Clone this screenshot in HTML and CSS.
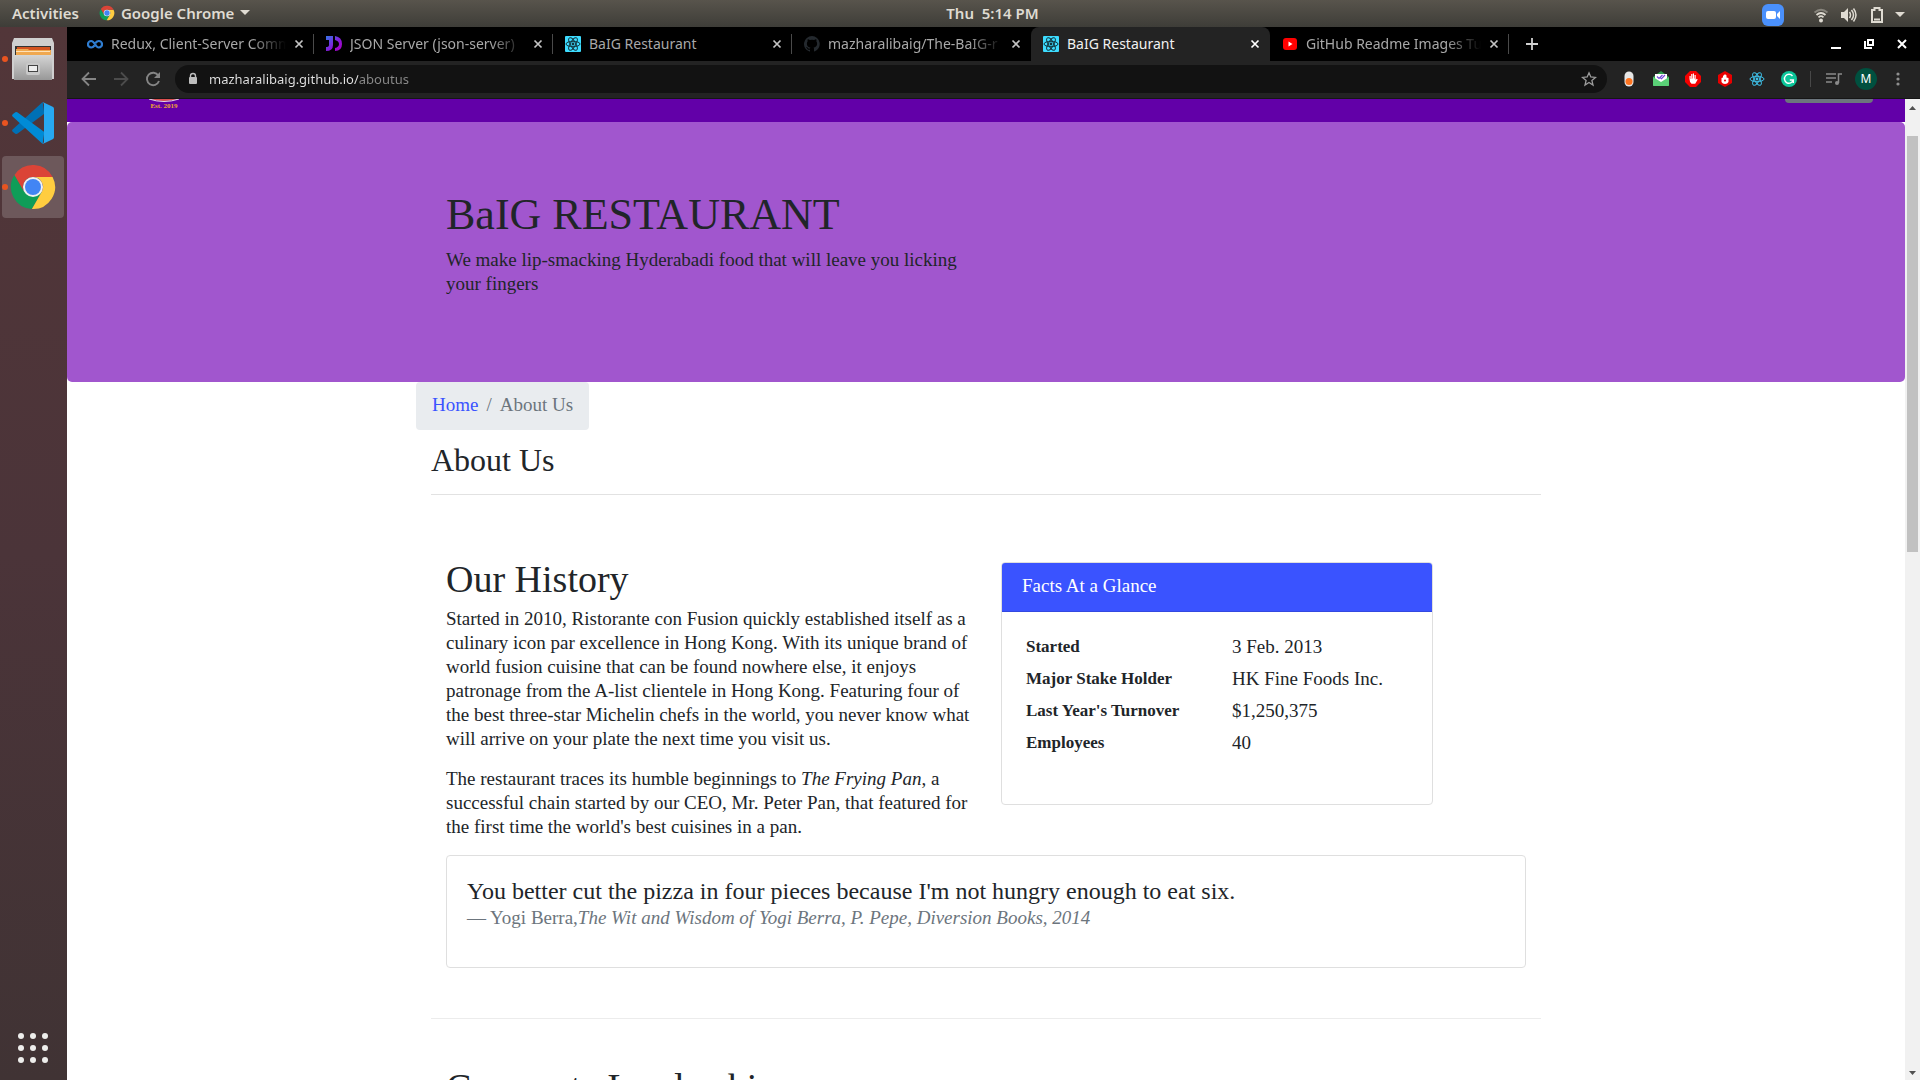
FILE: index.html
```html
<!DOCTYPE html>
<html lang="en">
<head>
<meta charset="utf-8">
<title>BaIG Restaurant</title>
<link rel="stylesheet" href="styles.css">
</head>
<body>
<svg class="defs" aria-hidden="true">
  <symbol id="chrome" viewBox="0 0 48 48">
    <path fill="#0f9d58" d="M5.5 12A22 22 0 0 0 22.9 46L32.7 29 15.3 29z"/>
    <path fill="#ffcd40" d="M43.6 14A22 22 0 0 1 22.9 46L32.7 29A10 10 0 0 0 24 14z"/>
    <path fill="#db4437" d="M24 14H43.6A22 22 0 0 0 5.5 12L15.3 29A10 10 0 0 1 24 14z"/>
    <circle cx="24" cy="24" r="10" fill="#f1f1f1"/><circle cx="24" cy="24" r="8" fill="#4285f4"/>
  </symbol>
  <symbol id="atom" viewBox="0 0 16 16">
    <g fill="none" stroke="currentColor" stroke-width="1">
      <ellipse cx="8" cy="8" rx="7" ry="2.7"/>
      <ellipse cx="8" cy="8" rx="7" ry="2.7" transform="rotate(60 8 8)"/>
      <ellipse cx="8" cy="8" rx="7" ry="2.7" transform="rotate(120 8 8)"/>
    </g>
    <circle cx="8" cy="8" r="1.4" fill="currentColor"/>
  </symbol>
  <symbol id="close" viewBox="0 0 10 10"><path d="M1.5 1.5l7 7M8.5 1.5l-7 7" stroke="currentColor" stroke-width="1.7"/></symbol>
  <symbol id="caret" viewBox="0 0 10 6"><path d="M0 0h10L5 5z" fill="currentColor"/></symbol>
</svg>

<header class="topbar">
  <div class="topbar-left">
    <button class="plain">Activities</button>
    <button class="plain app-menu"><svg width="16" height="16"><use href="#chrome"/></svg>Google Chrome<svg width="10" height="6"><use href="#caret"/></svg></button>
  </div>
  <button class="plain clock">Thu&nbsp; 5:14 PM</button>
  <div class="topbar-right">
    <svg class="meet" width="22" height="22" viewBox="0 0 22 22"><rect width="22" height="22" rx="6" fill="#4a90fb"/><rect x="4" y="7" width="10" height="8" rx="2" fill="#fff"/><path d="M15 10l3-3v8l-3-3z" fill="#fff"/></svg>
    <svg width="16" height="16" viewBox="0 0 16 16" fill="none" stroke="#dfdbd2" stroke-width="1.7"><path d="M1.5 5.500Q8 0 14.500 5.500" opacity=".4"/><path d="M3.500 8Q8 4 12.500 8M5.500 10.300Q8 8 10.500 10.300"/><circle cx="8" cy="13.500" r="2" fill="#dfdbd2" stroke="none"/></svg>
    <svg width="16" height="16" viewBox="0 0 16 16" fill="none" stroke="#dfdbd2" stroke-width="1.500"><path fill="#dfdbd2" stroke="none" d="M0 5h3l4-4v14l-4-4H0z"/><path d="M8.500 5q2 3 0 6M10.500 3q4 5 0 10M12.500 1.500q5 6.500 0 13"/></svg>
    <svg width="16" height="18" viewBox="0 0 16 18" fill="none" stroke="#dfdbd2" stroke-width="2"><path d="M3 4h2.500V2h5v2H13v12H3zM5 13.500h6"/></svg>
    <svg class="sys-caret" width="10" height="6"><use href="#caret"/></svg>
  </div>
</header>

<div class="desktop">
  <nav class="dock" aria-label="Dock">
    <button class="dock-item" aria-label="Files"><i class="dot"></i>
      <svg width="42" height="44" viewBox="0 0 42 44"><defs><linearGradient id="cab" x2="0" y2="1"><stop stop-color="#d5d5d5"/><stop offset="1" stop-color="#989898"/></linearGradient></defs><path fill="#cfcfcf" d="M2 1h38l2 5v36H0V6z"/><path fill="#333" d="M3 9h36v14H3z"/><path fill="#d35420" d="M5 10h33v9H5z"/><path fill="#f0a850" d="M4 12h12l1 1h22v7H4z"/><path fill="#ffe2b8" d="M4 14h34v1H4z"/><path fill="url(#cab)" d="M2 18h38v25H2z"/><rect x="14" y="26" width="14" height="12" rx="2" fill="#c8c8c8"/><rect x="16.500" y="28.500" width="9" height="6" fill="#eee" stroke="#444"/></svg>
    </button>
    <button class="dock-item" aria-label="Visual Studio Code"><i class="dot"></i>
      <svg width="42" height="42" viewBox="0 0 126 126"><path fill="#0070b5" d="M92 0L1 83Q-1 87 3 90L10 95Q14 97 18 94L97 35z"/><path fill="#008bd6" d="M3 36L10 31Q14 29 18 32L97 90 92 126 1 43Q-1 39 3 36z"/><path fill="#27a9f2" d="M92 0L122 14Q126 16 126 20V106Q126 110 122 112L92 126Q96 123 96 118V8Q96 3 92 0z"/></svg>
    </button>
    <button class="dock-item current" aria-label="Google Chrome"><i class="dot"></i><svg width="48" height="48"><use href="#chrome"/></svg></button>
    <button class="dock-item apps" aria-label="Show Applications"><svg width="30" height="30" viewBox="0 0 30 30" fill="#eeeeec"><circle cx="3" cy="3" r="3"/><circle cx="15" cy="3" r="3"/><circle cx="27" cy="3" r="3"/><circle cx="3" cy="15" r="3"/><circle cx="15" cy="15" r="3"/><circle cx="27" cy="15" r="3"/><circle cx="3" cy="27" r="3"/><circle cx="15" cy="27" r="3"/><circle cx="27" cy="27" r="3"/></svg></button>
  </nav>

  <div class="browser">
    <div class="tabstrip">
      <div class="tab"><svg width="16" height="16" viewBox="0 0 16 16" fill="none" stroke="#2f7dd1" stroke-width="2.200"><path d="M7.500 9.500Q6 11.500 4.200 11.500a3.200 3.200 0 0 1 0-6.500C8 5 8 11.500 11.800 11.500a3.200 3.200 0 0 0 0-6.500Q10 5 8.500 7"/></svg><span class="tab-title fade">Redux, Client-Server Comm</span><button class="tab-close" aria-label="Close tab"><svg width="10" height="10"><use href="#close"/></svg></button></div>
      <div class="tab"><svg width="16" height="16" viewBox="0 0 16 16"><defs><linearGradient id="jd" x2="1" y2="1"><stop stop-color="#3478e8"/><stop offset=".6" stop-color="#8c13d8"/><stop offset="1" stop-color="#b000c0"/></linearGradient></defs><path fill="url(#jd)" d="M0 0h7v9q0 6-7 6v-4q3 0 3-2V4H0zM9 0q7 1 7 8t-7 7v-3q4-1 4-4T9 4z"/></svg><span class="tab-title fade">JSON Server (json-server)</span><button class="tab-close" aria-label="Close tab"><svg width="10" height="10"><use href="#close"/></svg></button></div>
      <div class="tab"><svg class="atom-tile" width="16" height="16"><use href="#atom"/></svg><span class="tab-title">BaIG Restaurant</span><button class="tab-close" aria-label="Close tab"><svg width="10" height="10"><use href="#close"/></svg></button></div>
      <div class="tab"><svg width="16" height="16" viewBox="0 0 16 16"><path fill="#24292e" d="M8 0a8 8 0 0 0-2.500 15.600c.4 0 .5-.2.500-.4v-1.500c-2.200.5-2.700-1-2.700-1-.4-.9-.9-1.200-.9-1.200-.7-.5.100-.5.100-.5.800 0 1.200.8 1.200.8.700 1.200 1.900.9 2.300.7 0-.5.300-.9.500-1.100-1.800-.2-3.600-.9-3.600-4 0-.8.300-1.500.8-2.100-.1-.2-.4-1 .1-2.100 0 0 .7-.2 2.200.8a7 7 0 0 1 4 0c1.500-1 2.200-.8 2.200-.8.500 1.100.2 1.900.1 2.100.5.600.8 1.300.8 2.100 0 3.100-1.900 3.800-3.600 4 .3.200.5.700.5 1.500v2.200c0 .2.100.5.500.4A8 8 0 0 0 8 0"/></svg><span class="tab-title fade">mazharalibaig/The-BaIG-r</span><button class="tab-close" aria-label="Close tab"><svg width="10" height="10"><use href="#close"/></svg></button></div>
      <div class="tab active"><svg class="atom-tile" width="16" height="16"><use href="#atom"/></svg><span class="tab-title">BaIG Restaurant</span><button class="tab-close" aria-label="Close tab"><svg width="10" height="10"><use href="#close"/></svg></button></div>
      <div class="tab"><svg width="16" height="16" viewBox="0 0 16 16"><rect x="1" y="2" width="14" height="12" rx="3" fill="#f00"/><path d="M6.500 5.500v5l4-2.500z" fill="#fff"/></svg><span class="tab-title fade">GitHub Readme Images Tu</span><button class="tab-close" aria-label="Close tab"><svg width="10" height="10"><use href="#close"/></svg></button></div>
      <button class="new-tab" aria-label="New tab"><svg width="12" height="12" viewBox="0 0 12 12"><path d="M6 0v12M0 6h12" stroke="#d0d0d0" stroke-width="1.800"/></svg></button>
      <div class="window-controls">
        <button class="plain" aria-label="Minimize"><svg width="12" height="12" viewBox="0 0 12 12"><path d="M1 10h10" stroke="#fff" stroke-width="2"/></svg></button>
        <button class="plain" aria-label="Restore"><svg width="12" height="12" viewBox="0 0 12 12" fill="none" stroke="#fff" stroke-width="2"><path d="M5 2h5v5H5zM2 3v7h7"/></svg></button>
        <button class="plain" aria-label="Close window"><svg width="12" height="12" viewBox="0 0 12 12"><path d="M2 2l8 8M10 2l-8 8" stroke="#fff" stroke-width="2"/></svg></button>
      </div>
    </div>

    <div class="toolbar">
      <div class="nav-buttons">
        <button class="plain" aria-label="Back"><svg width="16" height="16" viewBox="0 0 16 16" fill="none" stroke="#858585" stroke-width="1.800"><path d="M15 8H2M8 1.500L1.500 8 8 14.500"/></svg></button>
        <button class="plain" aria-label="Forward"><svg width="16" height="16" viewBox="0 0 16 16" fill="none" stroke="#4c4c4c" stroke-width="1.800"><path d="M1 8h13M8 1.500L14.500 8 8 14.500"/></svg></button>
        <button class="plain" aria-label="Reload"><svg width="16" height="16" viewBox="0 0 16 16" fill="none" stroke="#858585" stroke-width="1.900"><path d="M13.300 4.500A6.200 6.200 0 1 0 14 10"/><path fill="#858585" stroke="none" d="M15 1v6H9z"/></svg></button>
      </div>
      <div class="omnibox">
        <svg width="12" height="14" viewBox="0 0 12 14"><rect x="2" y="5" width="8" height="7" rx="1" fill="#bdbdbd"/><path d="M3.500 6V4a2.500 2.500 0 0 1 5 0v2" fill="none" stroke="#bdbdbd" stroke-width="1.400"/></svg>
        <input class="url" aria-label="Address" value="mazharalibaig.github.io/aboutus">
        <button class="plain" aria-label="Bookmark"><svg width="16" height="16" viewBox="0 0 16 16"><path d="M8 1.800l1.800 4.200 4.700.4-3.600 3 1.100 4.600L8 11.500 4 14l1.100-4.600-3.600-3L6.200 6z" fill="none" stroke="#9c9c9c" stroke-width="1.300"/></svg></button>
      </div>
      <div class="extensions">
        <button class="plain" aria-label="Recorder"><svg width="16" height="16" viewBox="0 0 16 16"><rect x="3.500" y=".5" width="9" height="15" rx="4.500" fill="#e6e6e6"/><circle cx="8" cy="10.500" r="3.500" fill="#ff7420"/></svg></button>
        <button class="plain" aria-label="Mail tracker"><svg width="16" height="16" viewBox="0 0 16 16"><path fill="#2c9c4b" d="M8 0l8 6v9H0V6z"/><path fill="#fff" d="M2 3h12v8H2z"/><path fill="#5ad077" d="M0 6l8 5 8-5v8q0 1-1 1H1q-1 0-1-1z"/><path d="M4 5.500l2 2 3.500-3.500M7.500 7l1 .8L12 4" fill="none" stroke="#7048d8" stroke-width="1.200"/></svg></button>
        <button class="plain" aria-label="AdBlock"><svg width="16" height="16" viewBox="0 0 16 16"><path fill="#f50000" d="M5 0h6l5 5v6l-5 5H5l-5-5V5z"/><path fill="#fff" d="M4.500 8V5h1.200v3h.5V3h1.200v4.500h.5v-5H9v5h.5V4h1.200v5l1-1.200 1 .7-2.500 4.200H6.500Q4.500 11 4.500 8"/></svg></button>
        <button class="plain" aria-label="Ad blocker"><svg width="16" height="16" viewBox="0 0 16 16"><path fill="#e80000" d="M8 0l7 4v8l-7 4-7-4V4z"/><path fill="#fff" d="M4.500 7l1.500-.5V5l1.500-1.500Q9 3 9.500 4.500v2L11.500 7v4q-1 2-3.500 2t-3.500-2z"/><circle cx="8" cy="9.500" r="1" fill="#e80000"/></svg></button>
        <button class="plain react" aria-label="React Developer Tools"><svg width="16" height="16"><use href="#atom"/></svg></button>
        <button class="plain" aria-label="Grammarly"><svg width="16" height="16" viewBox="0 0 16 16"><circle cx="8" cy="8" r="8" fill="#0cc69a"/><path d="M11.500 5A4.500 4.500 0 1 0 12.300 9H8.800M12.300 9v3" fill="none" stroke="#fff" stroke-width="1.400"/></svg></button>
      </div>
      <div class="profile">
        <button class="plain" aria-label="Media controls"><svg width="16" height="16" viewBox="0 0 16 16" fill="none" stroke="#8b8b8b" stroke-width="1.500"><path d="M0 3h10M0 7h10M0 11h6M12.500 12V3H16"/><circle cx="11" cy="12" r="2" fill="#8b8b8b" stroke="none"/></svg></button>
        <button class="plain avatar" aria-label="Profile">M</button>
        <button class="plain" aria-label="Menu"><svg width="16" height="16" viewBox="0 0 16 16" fill="#8f8f8f"><circle cx="8" cy="3" r="1.600"/><circle cx="8" cy="8" r="1.600"/><circle cx="8" cy="13" r="1.600"/></svg></button>
      </div>
    </div>

    <div class="viewport">
      <div class="page">
        <div class="navbar">
          <svg width="34" height="12" viewBox="0 0 34 12"><path d="M3 0Q17 4 31 0z" fill="#dc5050"/><path d="M2 0q15 5 30 0" fill="none" stroke="#e9dbe6" stroke-width="1"/><text x="17" y="9" text-anchor="middle" class="logo-text">Est. 2019</text></svg>
          <button class="login" aria-label="Login"></button>
        </div>
        <header class="jumbotron">
          <div class="container">
            <div class="intro">
              <h1>BaIG RESTAURANT</h1>
              <p>We make lip-smacking Hyderabadi food that will leave you licking<br>your fingers</p>
            </div>
          </div>
        </header>
        <main class="container">
          <nav class="breadcrumb" aria-label="Breadcrumb"><a href="#">Home</a><span>/</span><span>About Us</span></nav>
          <h3>About Us</h3>
          <div class="row">
            <section>
              <h2>Our History</h2>
              <p>Started in 2010, Ristorante con Fusion quickly established itself as a<br>culinary icon par excellence in Hong Kong. With its unique brand of<br>world fusion cuisine that can be found nowhere else, it enjoys<br>patronage from the A-list clientele in Hong Kong. Featuring four of<br>the best three-star Michelin chefs in the world, you never know what<br>will arrive on your plate the next time you visit us.</p>
              <p>The restaurant traces its humble beginnings to <em>The Frying Pan</em>, a<br>successful chain started by our CEO, Mr. Peter Pan, that featured for<br>the first time the world's best cuisines in a pan.</p>
            </section>
            <section class="card facts">
              <div class="card-header">Facts At a Glance</div>
              <table>
                <tr><th scope="row">Started</th><td>3 Feb. 2013</td></tr>
                <tr><th scope="row">Major Stake Holder</th><td>HK Fine Foods Inc.</td></tr>
                <tr><th scope="row">Last Year's Turnover</th><td>$1,250,375</td></tr>
                <tr><th scope="row">Employees</th><td>40</td></tr>
              </table>
            </section>
            <blockquote class="card quote">
              <p>You better cut the pizza in four pieces because I'm not hungry enough to eat six.</p>
              <footer>— Yogi Berra,<cite>The Wit and Wisdom of Yogi Berra, P. Pepe, Diversion Books, 2014</cite></footer>
            </blockquote>
          </div>
          <div class="row leadership"><h2>Corporate Leadership</h2></div>
        </main>
      </div>
      <div class="scrollbar" aria-hidden="true">
        <svg width="7" height="4" viewBox="0 0 7 4"><path d="M0 4h7L3.500 0z" fill="#505050"/></svg>
        <div class="track"><div class="thumb"></div></div>
        <svg width="7" height="4" viewBox="0 0 7 4"><path d="M0 0h7L3.500 4z" fill="#505050"/></svg>
      </div>
    </div>
  </div>
</div>
</body>
</html>
```
FILE: styles.css
```css
* { box-sizing: border-box; }

body {
  margin: 0;
  height: 100vh;
  overflow: hidden;
  display: flex;
  flex-direction: column;
  font: 14px/20px "Noto Sans", sans-serif;
}

.defs { display: none; }
svg { display: block; flex: none; }
h1, h2, h3, p { margin: 0; font-weight: 400; }

button { font: inherit; color: inherit; cursor: pointer; }
.plain {
  border: 0;
  padding: 0;
  background: none;
  display: flex;
  align-items: center;
  justify-content: center;
}

/* System bar */
.topbar {
  flex: none;
  height: 27px;
  padding: 0 15px 4px 12px;
  display: grid;
  grid-template-columns: 1fr auto 1fr;
  align-items: center;
  background: linear-gradient(#58544c, #3e3d38);
  color: #dfdbd2;
  font-size: 15px;
  font-weight: 600;
}
.topbar-left, .topbar-right { display: flex; align-items: center; }
.topbar-left { gap: 20px; }
.app-menu { gap: 6px; }
.clock { margin-left: 68px; }
.topbar-right { justify-content: flex-end; gap: 12px; padding-top: 4px; }
.meet { margin-right: 17px; }
.sys-caret { margin-left: -2px; }

.desktop { flex: 1; min-height: 0; display: flex; }

/* Dock */
.dock {
  flex: none;
  width: 67px;
  padding: 1px 3px 1px 2px;
  display: flex;
  flex-direction: column;
  gap: 2px;
  background: linear-gradient(#523639, #4b3439 50%, #403334);
}
.dock-item {
  position: relative;
  width: 62px;
  height: 62px;
  padding: 0;
  border: 0;
  border-radius: 4px;
  background: none;
  display: grid;
  place-items: center;
}
.dock-item.current { background: #6d585b; }
.dock-item.apps { margin-top: auto; }
.dot {
  position: absolute;
  left: 0;
  top: 28px;
  width: 6px;
  height: 6px;
  border-radius: 50%;
  background: #e95420;
}

/* Browser chrome */
.browser { flex: 1; min-width: 0; display: flex; flex-direction: column; }
.tabstrip {
  flex: none;
  height: 34px;
  padding: 0 12px 0 8px;
  display: flex;
  background: #000;
  color: #a8a8a8;
}
.tab {
  position: relative;
  flex: 0 1 239px;
  min-width: 0;
  padding: 0 8px 0 12px;
  display: flex;
  align-items: center;
}
.tab::after {
  content: "";
  position: absolute;
  right: 0;
  top: 7px;
  width: 1px;
  height: 20px;
  background: #4a4a4a;
}
.tab.active { background: #232323; color: #f1f1f1; border-radius: 8px 8px 0 0; }
.tab.active::after, .tab:has(+ .active)::after { display: none; }
.tab-title { flex: 1; min-width: 0; margin: 0 6px 0 8px; overflow: hidden; white-space: nowrap; }
.fade { mask-image: linear-gradient(90deg, #000 80%, transparent); }
.tab-close { width: 14px; height: 16px; padding: 0; border: 0; background: none; display: grid; place-items: center; color: #c4c4c4; }
.active .tab-close { color: #fff; }
.atom-tile { background: #3ddcff; color: #12343c; border-radius: 1px; }
.new-tab { width: 46px; padding: 0; border: 0; background: none; display: grid; place-items: center; }
.window-controls { margin-left: auto; display: flex; align-items: center; gap: 21px; }

.toolbar {
  flex: none;
  height: 38px;
  padding: 0 14px 2px;
  display: flex;
  align-items: center;
  background: #232323;
  border-bottom: 1px solid #161616;
}
.nav-buttons { display: flex; gap: 16px; margin-right: 14px; }
.omnibox {
  flex: 1;
  height: 28px;
  padding: 0 10px 0 12px;
  display: flex;
  align-items: center;
  gap: 10px;
  border-radius: 14px;
  background: #121212;
}
.url {
  flex: 1;
  min-width: 0;
  padding: 0;
  border: 0;
  outline: 0;
  font: inherit;
  font-size: 13px;
  color: transparent;
  background: linear-gradient(90deg, #e3e3e3 149px, #8b8b8b 149px) text;
}
.extensions { display: flex; gap: 16px; margin-left: 14px; }
.react { color: #3fc0e8; }
.profile {
  display: flex;
  align-items: center;
  gap: 13px;
  height: 16px;
  margin-left: 13px;
  padding-left: 15px;
  border-left: 1px solid #484848;
}
.avatar { width: 22px; height: 22px; border-radius: 50%; background: #00503f; color: #fff; font-size: 12px; }

/* Web page */
.viewport { flex: 1; min-height: 0; display: flex; background: #fff; }
.page {
  flex: 1;
  min-width: 0;
  overflow: hidden;
  font: 19px/24px "Liberation Serif", serif;
  color: #212529;
}
.container { max-width: 1140px; margin: 0 auto; padding: 0 15px; }

.navbar {
  height: 23px;
  padding: 0 32px 0 80px;
  display: flex;
  align-items: flex-start;
  justify-content: space-between;
  background: #6200a8;
}
.logo-text { font: bold 7px "Liberation Serif", serif; fill: #f0a830; }
.login { width: 88px; height: 4px; padding: 0; border: 0; border-radius: 0 0 4px 4px; background: #6c757d; }

.jumbotron { padding: 66px 0 86px; background: #a156ce; border-radius: 5px; }
.intro { padding: 0 15px; }
h1 { font-size: 44px; line-height: 54px; margin-bottom: 6px; }

.breadcrumb {
  width: fit-content;
  height: 48px;
  margin-left: -15px;
  padding: 11px 16px;
  display: flex;
  gap: 8px;
  border-radius: 4px;
  background: #e9ecef;
  color: #6c757d;
}
.breadcrumb a { color: #3a53ff; text-decoration: none; }
h3 { padding: 12px 0 16px; font-size: 32px; line-height: 36px; border-bottom: 1px solid #e2e2e2; }

.row {
  padding: 67px 15px 50px;
  display: grid;
  grid-template-columns: 525fr 432fr 63fr;
  column-gap: 30px;
  align-items: start;
  border-bottom: 1px solid #ececec;
}
.row h2 { font-size: 38px; line-height: 34px; margin-bottom: 11px; }
.row section > p { margin-bottom: 16px; }
.leadership { display: block; padding-top: 51px; border: 0; }

.card { margin: 0; border: 1px solid #dfdfdf; border-radius: 4px; }
.facts { overflow: hidden; }
.card-header { height: 49px; padding: 11px 20px; background: #3a53ff; color: #fff; border-bottom: 1px solid #3348e0; }
table { width: 100%; margin: 19px 0 45px; border-spacing: 0; }
th, td { height: 32px; padding: 0; text-align: left; }
th { width: 230px; padding-left: 24px; font-size: 17px; }

.quote { grid-column: 1 / -1; padding: 20px 20px 33px; }
.quote p { font-size: 24px; line-height: 30px; }
.quote footer { height: 28px; color: #6c757d; }

.scrollbar {
  flex: none;
  width: 15px;
  padding: 7px 2px 5px;
  display: flex;
  flex-direction: column;
  align-items: center;
  background: #f1f1f1;
}
.track { flex: 1; width: 11px; padding: 26px 0 104px; }
.thumb { height: 50%; background: #c1c1c1; }
```
